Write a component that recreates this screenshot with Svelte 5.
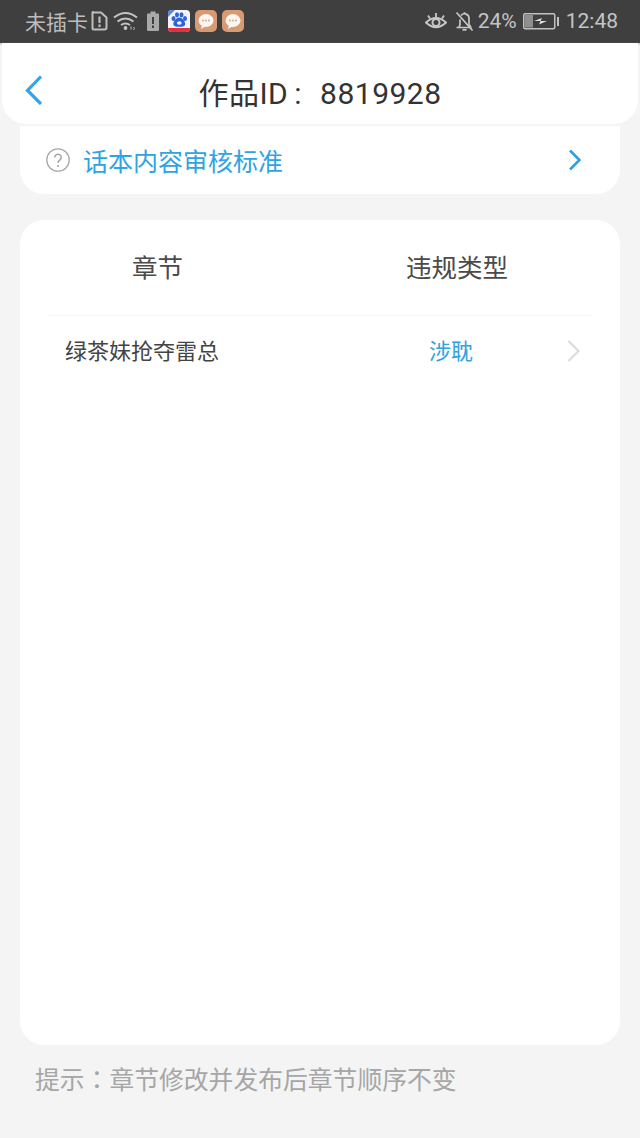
<script>
  const tipStart = '提示';
  const tipRest = '章节修改并发布后章节顺序不变';
</script>

<div class="page">
  <div class="status">
    <div class="side">
      <span class="carrier">未插卡</span>
      <svg class="sim" width="17" height="20" viewBox="0 0 17 20" fill="none" stroke="#bdbdbd" stroke-width="2"><path d="M2.500 1.500h7.500l5.500 5v10a2 2 0 0 1-2 2h-11a1 1 0 0 1-1-1v-15.500a.500.500 0 0 1 1-.500z" stroke-linejoin="round"/><path d="M8.500 5.500v6.500M8.500 13.500v2.500" stroke-width="2.200"/></svg>
      <svg class="wifi" width="25" height="20" viewBox="0 0 25 20" fill="none" stroke="#c4c4c4" stroke-width="2"><path d="M1 6.500q11.500-9 23 0"/><path d="M4.500 10.500q8-6 16 0"/><path d="M8 14q4.500-3 9 0"/><circle cx="12.500" cy="17" r="1.900" fill="#c4c4c4" stroke="none"/><path d="M18 15.500v3M20.500 16l1 1.500-1 1.500" stroke-width="1"/></svg>
      <svg class="batt1" width="12" height="20" viewBox="0 0 12 20"><path d="M3.500 0.500h5v2h2.500a1 1 0 0 1 1 1v15.500a1 1 0 0 1-1 1h-10a1 1 0 0 1-1-1v-15.500a1 1 0 0 1 1-1h2.500z" fill="#a9a9a9"/><path d="M6 6v7M6 14.500v2.500" stroke="#3f3f3f" stroke-width="2"/></svg>
      <svg class="app" width="22" height="22" viewBox="0 0 22 22"><rect width="22" height="22" rx="4" fill="#f4f4f8"/><path d="M0 18h22v0a4 4 0 0 1-4 4h-14a4 4 0 0 1-4-4z" fill="#e2303f"/><path d="M0 4a4 4 0 0 1 4-4h3l-7 7z" fill="#5b86e6"/><g fill="#2b63d8"><ellipse cx="5.500" cy="8.500" rx="2" ry="2.600"/><ellipse cx="9" cy="4.800" rx="2" ry="2.600"/><ellipse cx="13.500" cy="4.800" rx="2" ry="2.600"/><ellipse cx="17" cy="8.500" rx="2" ry="2.600"/><path d="M11.300 7.500c3.200 0 6 4.500 6 6.500s-2.200 2.800-6 2.800-6-.8-6-2.800 2.800-6.500 6-6.500z"/></g><ellipse cx="11.300" cy="13" rx="2.400" ry="1.800" fill="#f4f4f8"/></svg>
      {#each [0, 1] as i (i)}
        <svg class="app" width="22" height="22" viewBox="0 0 22 22"><rect width="22" height="22" rx="5" fill="#d79a72"/><ellipse cx="11" cy="10.500" rx="7.500" ry="6.500" fill="#fbf6f1"/><path d="M7 15l-1 4 5-3z" fill="#fbf6f1"/><g fill="#d7a98a"><circle cx="8" cy="10.500" r="1"/><circle cx="11" cy="10.500" r="1"/><circle cx="14" cy="10.500" r="1"/></g></svg>
      {/each}
    </div>
    <div class="side right">
      <svg class="eye" width="22" height="19" viewBox="0 0 22 19" fill="none" stroke="#c8c8c8" stroke-width="2"><path d="M1 10.500q10-9 20 0q-10 9.500-20 0z"/><circle cx="11" cy="10.500" r="3.500"/><path d="M3 3.500l2 3M11 1v4M19 3.500l-2 3" stroke-width="1.800"/></svg>
      <svg class="bell" width="19" height="21" viewBox="0 0 19 21" fill="none" stroke="#c8c8c8" stroke-width="1.700"><path d="M1.500 16.500h15M4 16.500l1-3v-5M6 4.500a4.500 4.500 0 0 1 8 3v6l2 3"/><path d="M7.500 18.800h4" stroke-width="1.800"/><path d="M9.500 1.200v1.800"/><path d="M1.500 1.500l16 18"/></svg>
      <span class="pct">24%</span>
      <svg class="batt2" width="36" height="17" viewBox="0 0 36 17"><rect x=".75" y=".75" width="31" height="15" rx="1.500" fill="none" stroke="#c2c2c2" stroke-width="1.500"/><rect x="2" y="2" width="8" height="12.500" fill="#8f8f8f"/><rect x="34" y="4" width="2" height="9" fill="#c2c2c2"/><path d="M11 8l8-3-1.500 3h6.500l-8 3.500 1.500-3.500z" fill="#e0e0e0"/></svg>
      <span class="time">12:48</span>
    </div>
  </div>

  <header class="nav">
    <svg class="back" width="18" height="30" viewBox="0 0 18 30" fill="none" stroke="#2ea5ec" stroke-width="3.200"><path d="M16 1.500L2.500 15.500l13.500 13.500"/></svg>
    <h1>作品ID<span class="h-colon">:</span>8819928</h1>
  </header>

  <section class="rule">
    <svg class="help" width="24" height="24" viewBox="0 0 24 24" fill="none"><circle cx="12" cy="12" r="11.200" stroke="#aaaaaa" stroke-width="1.300"/><path d="M8.800 9.500a3.200 3.200 0 1 1 5 2.600c-1.200.8-1.800 1.300-1.800 2.900" stroke="#a3a3a3" stroke-width="1.500"/><circle cx="12" cy="18" r="1" fill="#a3a3a3"/></svg>
    <span class="rule-text">话本内容审核标准</span>
    <svg class="rule-arrow" width="13" height="22" viewBox="0 0 13 22" fill="none" stroke="#2d9fe3" stroke-width="2.600"><path d="M2 1.500l9.500 9.500-9.500 9.500"/></svg>
  </section>

  <section class="table">
    <div class="thead">
      <span class="col-chapter">章节</span>
      <span class="col-type">违规类型</span>
    </div>
    <div class="row">
      <span class="name">绿茶妹抢夺雷总</span>
      <span class="type">涉耽</span>
      <svg class="row-arrow" width="13" height="22" viewBox="0 0 13 22" fill="none" stroke="#dcdcdc" stroke-width="2.200"><path d="M1.500 1l10 10-10 10"/></svg>
    </div>
  </section>

  <p class="tip">{tipStart}<span class="colon">：</span>{tipRest}</p>
</div>

<style>
  :global(body) {
    margin: 0;
    background: #f4f4f4;
  }
  .page {
    width: 640px;
    height: 1138px;
    overflow: hidden;
    background: #f4f4f4;
    font-family: "Noto Sans CJK SC", "Noto Sans", sans-serif;
  }
  .status {
    height: 42px;
    background: #3f3f3f;
    box-shadow: 0 1px 2px rgba(0, 0, 0, 0.3);
    border-bottom: 1px solid #444;
    display: flex;
    justify-content: space-between;
    align-items: center;
    padding: 0 22px 0 25px;
    color: #bdbdbd;
    position: relative;
  }
  .side {
    display: flex;
    align-items: center;
  }
  .carrier {
    font-size: 21px;
    line-height: 24px;
    margin-right: 3px;
  }
  .wifi { margin-left: 5px; }
  .batt1 { margin-left: 9px; }
  .app { margin-left: 5px; }
  .batt1 + .app { margin-left: 9px; }
  .pct, .time {
    font-family: Roboto, sans-serif;
    font-size: 21px;
    color: #c4c4c4;
  }
  .bell { margin-left: 8px; }
  .pct { margin-left: 4px; }
  .batt2 { margin-left: 6px; }
  .time { margin-left: 7px; }
  .nav {
    height: 81px;
    margin: 0 2px;
    background: #fff;
    border-radius: 0 0 24px 24px;
    display: flex;
    align-items: center;
    justify-content: center;
    position: relative;
  }
  .back {
    position: absolute;
    left: 23px;
    top: 32px;
  }
  h1 {
    margin: 14px 0 0;
    font-weight: 400;
    font-size: 30px;
    color: #333;
    letter-spacing: 0.5px;
    font-family: Roboto, "Noto Sans CJK SC", sans-serif;
  }
  .h-colon { margin: 0 18px 0 6px; }
  .rule {
    height: 68px;
    margin: 2px 20px 0;
    background: #fff;
    border-radius: 0 0 24px 24px;
    display: flex;
    align-items: center;
    padding: 0 39px 0 26px;
  }
  .rule-text {
    margin-left: 13px;
    font-size: 25px;
    color: #2fa3e3;
    flex: 1;
  }
  .table {
    height: 825px;
    margin: 26px 20px 0;
    background: #fff;
    border-radius: 24px;
    padding: 0 27px;
  }
  .thead {
    height: 96px;
    border-bottom: 1px solid #f6f6f6;
    display: flex;
    align-items: center;
    font-size: 25.500px;
    line-height: 1;
    color: #4a4a4a;
    padding-bottom: 4px;
    box-sizing: border-box;
  }
  .col-chapter { margin-left: 85px; }
  .col-type { margin-left: 223px; }
  .row {
    display: flex;
    align-items: center;
    height: 70px;
    padding-bottom: 4px;
    box-sizing: border-box;
    font-size: 22px;
    color: #444;
    position: relative;
  }
  .name { margin-left: 18px; }
  .type {
    position: absolute;
    left: 382px;
    color: #35a2e0;
  }
  .row-arrow {
    position: absolute;
    left: 520px;
    top: 24px;
  }
  .tip {
    margin: 18px 0 0 35px;
    font-size: 24.800px;
    line-height: 30px;
    color: #a6a6a6;
    white-space: nowrap;
  }
  .colon {
    font-family: "Noto Sans CJK TC", sans-serif;
  }
</style>
